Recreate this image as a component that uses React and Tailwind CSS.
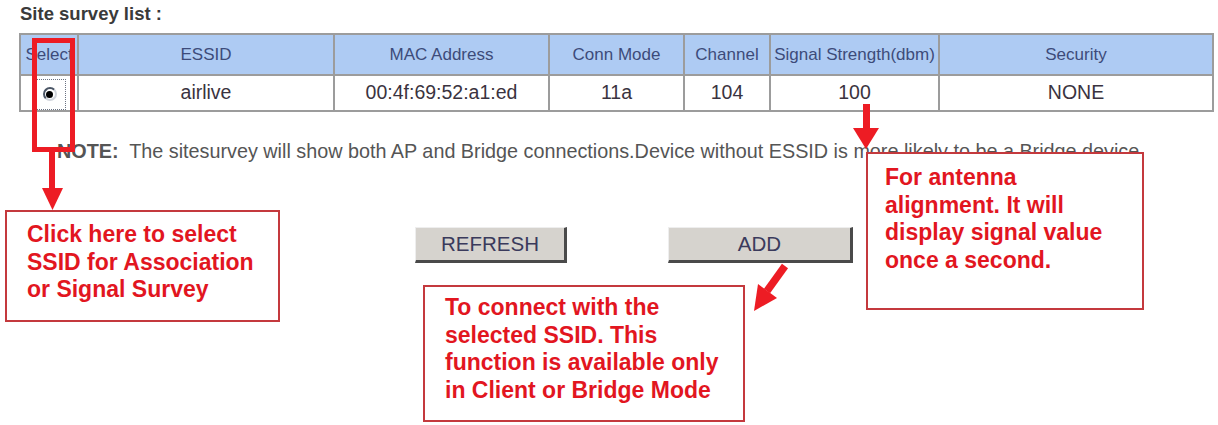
import React from 'react';

const columns = [
  { label: 'Select', width: 58 },
  { label: 'ESSID', width: 256 },
  { label: 'MAC Address', width: 215 },
  { label: 'Conn Mode', width: 135 },
  { label: 'Channel', width: 86 },
  { label: 'Signal Strength(dbm)', width: 169 },
  { label: 'Security', width: 274 },
];

const row = ['airlive', '00:4f:69:52:a1:ed', '11a', '104', '100', 'NONE'];

function Radio() {
  return (
    <span className="inline-flex items-center justify-center w-[33px] h-[31px] border border-dotted border-gray-500 ml-[12px]">
      <span className="w-[14px] h-[14px] rounded-full border-2 border-l-gray-600 border-t-gray-600 border-r-gray-300 border-b-gray-300 bg-white flex items-center justify-center">
        <span className="w-[7px] h-[7px] rounded-full bg-black" />
      </span>
    </span>
  );
}

function Callout({ className, children }) {
  return (
    <div className={`absolute bg-white border-2 border-[#c4393d] text-[#e2161f] font-bold text-[23px] leading-[27.6px] ${className}`}>
      {children}
    </div>
  );
}

export default function App() {
  return (
    <div
      className="relative w-[1218px] h-[425px] bg-white overflow-hidden text-[#333]"
      style={{ fontFamily: '"Liberation Sans", Arial, sans-serif' }}
    >
      <div className="pl-[20px] pt-[3px] text-[18.5px] leading-[21px] font-bold text-[#3a3a3a]">Site survey list :</div>

      <table className="ml-[19px] mt-[9px] w-[1193px] table-fixed border-collapse border-2 border-[#8f8f8f]">
        <colgroup>
          {columns.map((c) => (
            <col key={c.label} style={{ width: c.width }} />
          ))}
        </colgroup>
        <thead>
          <tr className="h-[41px] bg-[#aecbf3]">
            {columns.map((c) => (
              <th
                key={c.label}
                className="border-2 border-[#9c9c9c] font-normal text-[17px] text-[#3d4b7a] whitespace-nowrap overflow-hidden px-0 text-center"
              >
                {c.label}
              </th>
            ))}
          </tr>
        </thead>
        <tbody>
          <tr className="h-[36px] text-[19.5px]">
            <td className="border-2 border-[#9c9c9c] p-0">
              <Radio />
            </td>
            {row.map((v, i) => (
              <td key={i} className="border-2 border-[#9c9c9c] text-center text-[#3a3340]">
                {v}
              </td>
            ))}
          </tr>
        </tbody>
      </table>

      <p className="mt-[29px] pl-[57px] text-[19.8px] leading-[21px] text-[#555] whitespace-nowrap">
        <span className="font-bold">NOTE:</span>&nbsp; The sitesurvey will show both AP and Bridge connections.Device without ESSID is more likely to be a Bridge device.
      </p>

      <div className="flex mt-[65px]">
        <button className="ml-[415px] w-[152px] h-[36px] bg-[#d6d3ce] border-t border-l border-[#eeeeee] border-r-[3px] border-b-[3px] border-r-[#4a4a4a] border-b-[#4a4a4a] text-[20.5px] text-[#3a3a5c]">
          REFRESH
        </button>
        <button className="ml-[101px] w-[185px] h-[36px] bg-[#d6d3ce] border-t border-l border-[#eeeeee] border-r-[3px] border-b-[3px] border-r-[#4a4a4a] border-b-[#4a4a4a] text-[20.5px] text-[#3a3a5c]">
          ADD
        </button>
      </div>

      {/* highlight around the select column */}
      <div className="absolute left-[32px] top-[38px] w-[43px] h-[114px] border-[5px] border-[#ed1c24]" />

      {/* arrow down to the select callout */}
      <svg className="absolute left-[40px] top-[150px]" width="25" height="62" viewBox="0 0 25 62">
        <rect x="9" y="0" width="6" height="40" fill="#ed1c24" />
        <polygon points="2,38 23,38 12.5,60" fill="#ed1c24" />
      </svg>

      <Callout className="left-[5px] top-[210px] w-[275px] h-[112px] pl-[20px] pt-[9px]">
        Click here to select<br />SSID for Association<br />or Signal Survey
      </Callout>

      <Callout className="left-[866px] top-[152px] w-[278px] h-[158px] pl-[17px] pt-[10px]">
        For antenna<br />alignment. It will<br />display signal value<br />once a second.
      </Callout>

      {/* arrow from the signal value */}
      <svg className="absolute left-[850px] top-[104px]" width="32" height="46" viewBox="0 0 32 46">
        <rect x="13" y="0" width="7" height="26" fill="#ed1c24" />
        <polygon points="3,24 29,24 16,45" fill="#ed1c24" />
      </svg>

      <Callout className="left-[423px] top-[285px] w-[322px] h-[137px] pl-[20px] pt-[7px]">
        To connect with the<br />selected SSID. This<br />function is available only<br />in Client or Bridge Mode
      </Callout>

      {/* diagonal arrow from the ADD button */}
      <svg className="absolute left-[745px] top-[260px]" width="48" height="58" viewBox="0 0 48 58">
        <line x1="40" y1="6" x2="22" y2="31" stroke="#ed1c24" strokeWidth="7.5" />
        <polygon points="9,51 32,38 13,24" fill="#ed1c24" />
      </svg>
    </div>
  );
}
